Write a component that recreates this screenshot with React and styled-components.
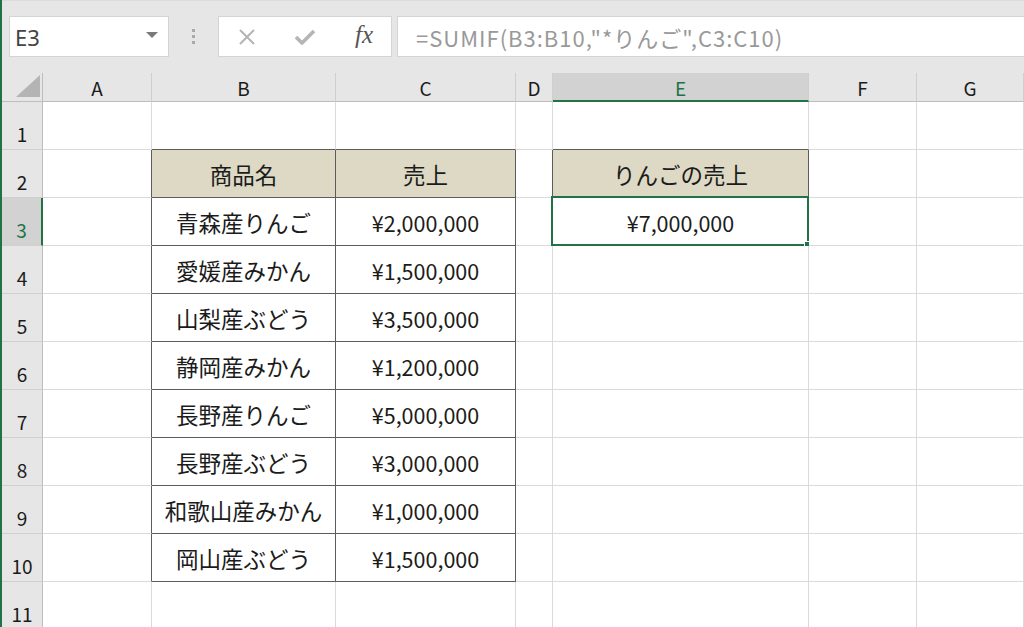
import React from 'react';
import styled, { createGlobalStyle } from 'styled-components';

const GlobalStyle = createGlobalStyle`
  html, body {
    margin: 0;
    padding: 0;
    background: #ffffff;
    overflow: hidden;
  }
  * {
    box-sizing: border-box;
  }
`;

const COLS = ['A', 'B', 'C', 'D', 'E', 'F', 'G'];
const COL_WIDTHS = '41px 109px 184px 180px 37px 256px 108px 1fr';
const ROW_COUNT = 11;

const cells = {
  B2: { text: '商品名', head: true },
  C2: { text: '売上', head: true },
  E2: { text: 'りんごの売上', head: true },
  B3: { text: '青森産りんご' },
  C3: { text: '¥2,000,000', num: true },
  B4: { text: '愛媛産みかん' },
  C4: { text: '¥1,500,000', num: true },
  B5: { text: '山梨産ぶどう' },
  C5: { text: '¥3,500,000', num: true },
  B6: { text: '静岡産みかん' },
  C6: { text: '¥1,200,000', num: true },
  B7: { text: '長野産りんご' },
  C7: { text: '¥5,000,000', num: true },
  B8: { text: '長野産ぶどう' },
  C8: { text: '¥3,000,000', num: true },
  B9: { text: '和歌山産みかん' },
  C9: { text: '¥1,000,000', num: true },
  B10: { text: '岡山産ぶどう' },
  C10: { text: '¥1,500,000', num: true },
  E3: { text: '¥7,000,000', num: true },
};

const inTable = (row, col) => {
  if ((col === 1 || col === 2) && row >= 2 && row <= 10) return true;
  if (col === 4 && row >= 2 && row <= 3) return true;
  return false;
};

const Window = styled.div`
  width: 1024px;
  height: 627px;
  border-left: 2px solid #217346;
  background: #ffffff;
  font-family: "Noto Sans CJK JP", "Noto Sans", sans-serif;
  color: #1b1b1b;
  overflow: hidden;
`;

const Toolbar = styled.div`
  height: 73px;
  background: #e6e6e6;
  display: flex;
  align-items: flex-start;
  padding: 15px 0 0 7px;
  border-top: 1px solid #dcdcdc;
`;

const NameBox = styled.div`
  width: 160px;
  height: 41px;
  background: #ffffff;
  border: 1px solid #d4d4d4;
  display: flex;
  align-items: center;
  justify-content: space-between;
  padding: 0 10px 0 5px;
  font-family: "Noto Sans", sans-serif;
  font-size: 22px;
  color: #444444;
`;

const Caret = styled.span`
  width: 0;
  height: 0;
  border-left: 6px solid transparent;
  border-right: 6px solid transparent;
  border-top: 6px solid #7a7a7a;
  margin-top: -4px;
`;

const Grip = styled.div`
  width: 49px;
  height: 41px;
  display: flex;
  flex-direction: column;
  align-items: center;
  justify-content: center;
  gap: 3px;
`;

const GripDot = styled.span`
  width: 3px;
  height: 3px;
  background: #a9a9a9;
`;

const FxBox = styled.div`
  width: 174px;
  height: 41px;
  background: #ffffff;
  border: 1px solid #d4d4d4;
  display: flex;
  align-items: center;
  padding-left: 18px;
  gap: 37px;
`;

const FxLabel = styled.span`
  font-family: "Liberation Serif", serif;
  font-style: italic;
  font-size: 25px;
  color: #555555;
  margin-left: 2px;
  margin-top: -3px;
`;

const FormulaBox = styled.div`
  flex: 1;
  height: 41px;
  margin-left: 5px;
  background: #ffffff;
  border: 1px solid #d4d4d4;
  border-right: none;
  display: flex;
  align-items: center;
  padding-left: 18px;
  font-family: "Noto Sans CJK JP", "Noto Sans", sans-serif;
  font-size: 22px;
  letter-spacing: 1px;
  color: #999999;
  white-space: nowrap;
`;

const Sheet = styled.div`
  display: grid;
  grid-template-columns: ${COL_WIDTHS};
  grid-template-rows: 29px repeat(${ROW_COUNT}, 48px);
`;

const Corner = styled.div`
  background: #e6e6e6;
  border-right: 1px solid #bdbdbd;
  border-bottom: 1px solid #bdbdbd;
  display: flex;
  align-items: flex-end;
  justify-content: flex-end;
  padding: 0 2px 4px 0;
`;

const ColHead = styled.div`
  background: ${(p) => (p.$active ? '#d2d2d2' : '#e6e6e6')};
  border-right: 1px solid #cfcfcf;
  border-bottom: ${(p) => (p.$active ? '2px solid #217346' : '1px solid #bdbdbd')};
  color: ${(p) => (p.$active ? '#217346' : '#1b1b1b')};
  display: flex;
  align-items: center;
  justify-content: center;
  font-size: 19px;
  padding-top: ${(p) => (p.$active ? '1px' : '0')};
`;

const RowHead = styled.div`
  background: ${(p) => (p.$active ? '#d2d2d2' : '#e6e6e6')};
  border-right: ${(p) => (p.$active ? '2px solid #217346' : '1px solid #bdbdbd')};
  border-bottom: 1px solid #d0d0d0;
  color: ${(p) => (p.$active ? '#217346' : '#1b1b1b')};
  display: flex;
  align-items: flex-end;
  justify-content: center;
  padding-bottom: 2px;
  font-size: 19px;
`;

const Cell = styled.div`
  position: relative;
  background: ${(p) => (p.$head ? '#ddd9c4' : '#ffffff')};
  border-right: 1px solid ${(p) => (p.$darkRight ? '#5c5c5c' : '#dadada')};
  border-bottom: 1px solid ${(p) => (p.$darkBottom ? '#5c5c5c' : '#dadada')};
  display: flex;
  align-items: center;
  justify-content: center;
  padding-top: 1px;
  font-size: ${(p) => (p.$num ? '21.5px' : '22.5px')};
  white-space: nowrap;
`;

const Selection = styled.div`
  position: absolute;
  left: -2px;
  top: -2px;
  right: -1px;
  bottom: -1px;
  border: 2px solid #217346;
  pointer-events: none;
`;

const FillHandle = styled.span`
  position: absolute;
  right: -5px;
  bottom: -5px;
  width: 7px;
  height: 7px;
  background: #217346;
  outline: 1px solid #ffffff;
`;

function CancelIcon() {
  return (
    <svg width="20" height="20" viewBox="0 0 20 20">
      <path d="M3 3 L17 17 M17 3 L3 17" stroke="#b5b5b5" strokeWidth="2" fill="none" />
    </svg>
  );
}

function EnterIcon() {
  return (
    <svg width="22" height="20" viewBox="0 0 22 20">
      <path d="M2 10 L8 16 L20 4" stroke="#b5b5b5" strokeWidth="3.6" strokeLinejoin="round" fill="none" />
    </svg>
  );
}

function SelectAll() {
  return (
    <svg width="24" height="22" viewBox="0 0 24 22">
      <polygon points="24,0 24,22 0,22" fill="#b4b4b4" />
    </svg>
  );
}

export default function App() {
  const rows = Array.from({ length: ROW_COUNT }, (_, i) => i + 1);

  return (
    <Window>
      <GlobalStyle />
      <Toolbar>
        <NameBox>
          E3
          <Caret />
        </NameBox>
        <Grip>
          <GripDot />
          <GripDot />
          <GripDot />
        </Grip>
        <FxBox>
          <CancelIcon />
          <EnterIcon />
          <FxLabel>fx</FxLabel>
        </FxBox>
        <FormulaBox>=SUMIF(B3:B10,"*りんご",C3:C10)</FormulaBox>
      </Toolbar>

      <Sheet>
        <Corner>
          <SelectAll />
        </Corner>
        {COLS.map((c) => (
          <ColHead key={c} $active={c === 'E'}>{c}</ColHead>
        ))}

        {rows.map((r) => (
          <React.Fragment key={r}>
            <RowHead $active={r === 3}>{r}</RowHead>
            {COLS.map((c, ci) => {
              const data = cells[c + r];
              const selected = c === 'E' && r === 3;
              return (
                <Cell
                  key={c + r}
                  $head={data && data.head}
                  $num={data && data.num}
                  $darkRight={inTable(r, ci) || inTable(r, ci + 1)}
                  $darkBottom={inTable(r, ci) || inTable(r + 1, ci)}
                >
                  {data ? data.text : ''}
                  {selected && (
                    <Selection>
                      <FillHandle />
                    </Selection>
                  )}
                </Cell>
              );
            })}
          </React.Fragment>
        ))}
      </Sheet>
    </Window>
  );
}
